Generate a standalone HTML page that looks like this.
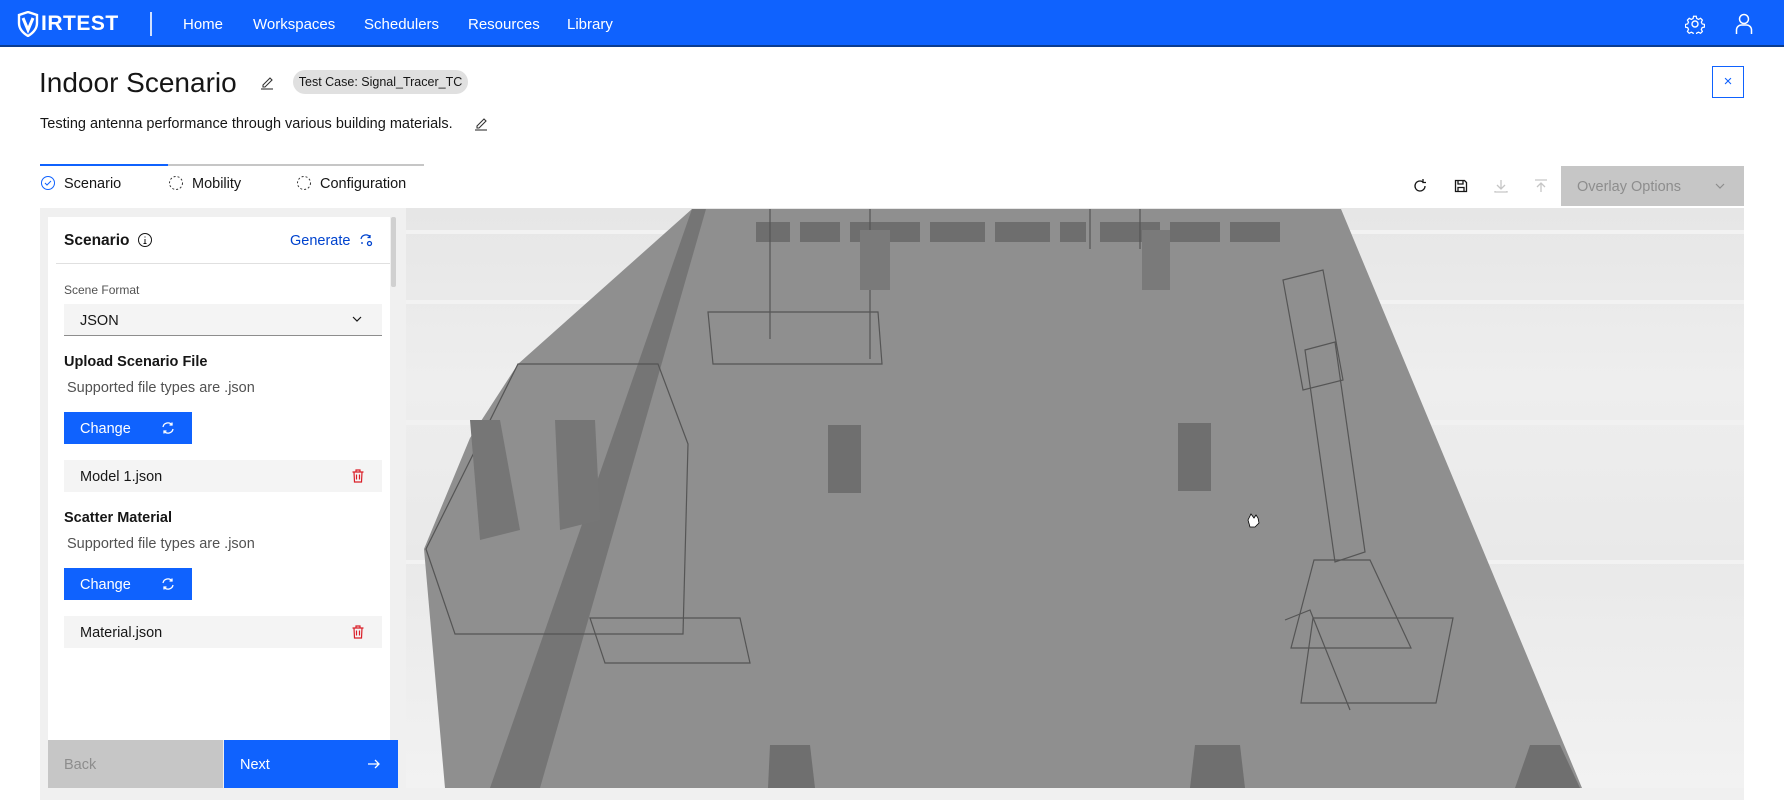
<!DOCTYPE html>
<html><head><meta charset="utf-8">
<style>
*{margin:0;padding:0;box-sizing:border-box}
body{width:1784px;height:800px;overflow:hidden;background:#fff;font-family:"Liberation Sans",sans-serif;color:#161616;position:relative}
.abs{position:absolute}
.hdr{left:0;top:0;width:1784px;height:47px;background:#0f62fe;border-bottom:2px solid #0b3d91}
.nav{top:16px;color:#fff;font-size:15px}
.t{white-space:nowrap}
</style></head><body>
<div class="abs hdr"></div>
<svg class="abs" style="left:17px;top:11px" width="22" height="26" viewBox="0 0 22 26"><path d="M11 1L20 4V12C20 18 16 22 11 25C6 22 2 18 2 12V4Z" fill="none" stroke="#fff" stroke-width="2.4"/><path d="M6 7L11 19L16 7" fill="none" stroke="#fff" stroke-width="3"/></svg>
<div class="abs t" style="left:41px;top:12px;color:#fff;font-weight:bold;font-size:21px;letter-spacing:0.5px">IRTEST</div>
<div class="abs" style="left:150px;top:12px;width:2px;height:24px;background:#cfe0ff"></div>
<div class="abs nav t" style="left:183px">Home</div>
<div class="abs nav t" style="left:253px">Workspaces</div>
<div class="abs nav t" style="left:364px">Schedulers</div>
<div class="abs nav t" style="left:468px">Resources</div>
<div class="abs nav t" style="left:567px">Library</div>
<svg class="abs" style="left:1685px;top:14px" width="20" height="20" viewBox="0 0 20 20" fill="none" stroke="#fff" stroke-width="1.4"><circle cx="10" cy="10" r="3"/><path d="M8.5 1.5h3l.5 2.5 2 1 2.3-1.2 2 2-1.2 2.3 1 2 2.5.5v3l-2.5.5-1 2 1.2 2.3-2 2-2.3-1.2-2 1-.5 2.5h-3l-.5-2.5-2-1-2.3 1.2-2-2 1.2-2.3-1-2-2.5-.5v-3l2.5-.5 1-2-1.2-2.3 2-2 2.3 1.2 2-1z" transform="scale(.9) translate(1 1)"/></svg>
<svg class="abs" style="left:1735px;top:13px" width="18" height="22" viewBox="0 0 18 22" fill="none" stroke="#fff" stroke-width="1.5"><circle cx="9" cy="6" r="4.5"/><path d="M1.5 21V17a5 5 0 0 1 5-5h5a5 5 0 0 1 5 5v4"/></svg>

<div class="abs t" style="left:39px;top:67px;font-size:28px;font-weight:300">Indoor Scenario</div>
<svg class="abs" style="left:259px;top:74px" width="16" height="16" viewBox="0 0 16 16" fill="none" stroke="#333" stroke-width="1.1"><path d="M4 11L11 4l2 2-7 7H4z"/><path d="M2 15h12"/></svg>
<div class="abs t" style="left:293px;top:70px;width:175px;height:24px;border-radius:12px;background:#e0e0e0;font-size:12.5px;line-height:24px;text-align:center;color:#161616">Test Case: Signal_Tracer_TC</div>
<div class="abs" style="left:1712px;top:66px;width:32px;height:32px;border:1px solid #0f62fe;color:#0f62fe;font-size:15px;line-height:29px;text-align:center">×</div>
<div class="abs t" style="left:40px;top:116px;font-size:14.5px">Testing antenna performance through various building materials.</div>
<svg class="abs" style="left:473px;top:115px" width="16" height="16" viewBox="0 0 16 16" fill="none" stroke="#333" stroke-width="1.1"><path d="M4 11L11 4l2 2-7 7H4z"/><path d="M2 15h12"/></svg>

<div class="abs" style="left:40px;top:164px;width:384px;height:2px;background:#c6c6c6"></div>
<div class="abs" style="left:40px;top:164px;width:128px;height:2px;background:#0f62fe"></div>
<svg class="abs" style="left:40px;top:175px" width="16" height="16" viewBox="0 0 16 16" fill="none"><circle cx="8" cy="8" r="6.5" stroke="#0f62fe"/><path d="M5 8l2 2 4-4" stroke="#0f62fe"/></svg>
<div class="abs t" style="left:64px;top:176px;font-size:14.5px">Scenario</div>
<svg class="abs" style="left:168px;top:175px" width="16" height="16" viewBox="0 0 16 16" fill="none"><circle cx="8" cy="8" r="6.5" stroke="#333" stroke-dasharray="2 2"/></svg>
<div class="abs t" style="left:192px;top:176px;font-size:14.5px">Mobility</div>
<svg class="abs" style="left:296px;top:175px" width="16" height="16" viewBox="0 0 16 16" fill="none"><circle cx="8" cy="8" r="6.5" stroke="#333" stroke-dasharray="2 2"/></svg>
<div class="abs t" style="left:320px;top:176px;font-size:14.5px">Configuration</div>

<svg class="abs" style="left:1412px;top:178px" width="16" height="16" viewBox="0 0 16 16" fill="none" stroke="#161616" stroke-width="1.3"><path d="M13 8a5 5 0 1 1-2-4"/><path d="M11 1v3.5h3"/></svg>
<svg class="abs" style="left:1453px;top:178px" width="16" height="16" viewBox="0 0 16 16" fill="none" stroke="#161616" stroke-width="1.3"><path d="M2.5 2.5h9l2 2v9h-11z"/><path d="M5 2.5v3.5h5V2.5M5 13.5v-4h6v4"/></svg>
<svg class="abs" style="left:1493px;top:178px" width="16" height="16" viewBox="0 0 16 16" fill="none" stroke="#c6c6c6" stroke-width="1.3"><path d="M8 2v9M4 7l4 4 4-4M2 13v1h12v-1"/></svg>
<svg class="abs" style="left:1533px;top:178px" width="16" height="16" viewBox="0 0 16 16" fill="none" stroke="#c6c6c6" stroke-width="1.3"><path d="M8 14V5M4 9l4-4 4 4M2 2h12"/></svg>
<div class="abs" style="left:1561px;top:166px;width:183px;height:40px;background:#c6c6c6"></div>
<div class="abs t" style="left:1577px;top:179px;font-size:14.5px;color:#8d8d8d">Overlay Options</div>
<svg class="abs" style="left:1713px;top:180px" width="14" height="12" viewBox="0 0 14 12" fill="none" stroke="#8d8d8d" stroke-width="1.2"><path d="M3 4l4 4 4-4"/></svg>

<div class="abs" style="left:40px;top:208px;width:1704px;height:592px;background:#f0f0f0"></div>
<svg class="abs" style="left:406px;top:208px" width="1338" height="580" viewBox="406 208 1338 580">
<defs><linearGradient id="bg" x1="0" y1="0" x2="0" y2="1"><stop offset="0" stop-color="#e6e6e6"/><stop offset=".3" stop-color="#eeeeee"/><stop offset=".6" stop-color="#e9e9e9"/><stop offset="1" stop-color="#f2f2f2"/></linearGradient></defs>
<rect x="406" y="208" width="1338" height="580" fill="url(#bg)"/>
<rect x="406" y="230" width="1338" height="4" fill="#f2f2f2"/><rect x="406" y="300" width="1338" height="4" fill="#f2f2f2"/><rect x="406" y="420" width="1338" height="5" fill="#f1f1f1"/><rect x="406" y="560" width="1338" height="4" fill="#f2f2f2"/>
<polygon points="692,209 1341,209 1582,788 445,788 424,549 470,438 518,364" fill="#8f8f8f"/>
<polygon points="692,209 706,209 540,788 490,788" fill="#757575"/>
<rect x="756" y="222" width="330" height="20" fill="#6e6e6e"/>
<rect x="1100" y="222" width="180" height="20" fill="#6e6e6e"/>
<g fill="#8f8f8f"><rect x="790" y="222" width="10" height="20"/><rect x="840" y="222" width="10" height="20"/><rect x="920" y="222" width="10" height="20"/><rect x="985" y="222" width="10" height="20"/><rect x="1050" y="222" width="10" height="20"/><rect x="1160" y="222" width="10" height="20"/><rect x="1220" y="222" width="10" height="20"/></g>
<g fill="none" stroke="#555" stroke-width="1.2">
<path d="M708 312h170l4 52H713z"/><path d="M1314 560l-23 88h120l-41-88zM1313 618h140l-17 85h-135z"/><path d="M590 618h150l10 45H605z"/>
<path d="M518 364h140l30 80-5 190H455l-29-85z"/>
<path d="M1283 280l40-10 20 110-40 10z"/><path d="M1305 350l30-8 30 210-30 10z"/>
<path d="M770 209v130M870 209v150M1090 209v40M1140 209v40"/>
<path d="M1285 620l25 -10 40 100" />
</g>
<rect x="828" y="425" width="33" height="68" fill="#6f6f6f"/><rect x="1178" y="423" width="33" height="68" fill="#6f6f6f"/>
<rect x="860" y="230" width="30" height="60" fill="#7a7a7a"/><rect x="1142" y="230" width="28" height="60" fill="#7a7a7a"/>
<polygon points="770,745 810,745 815,788 768,788" fill="#6f6f6f"/><polygon points="1195,745 1240,745 1245,788 1190,788" fill="#6f6f6f"/><polygon points="1530,745 1560,745 1580,788 1515,788" fill="#6f6f6f"/>
<polygon points="470,420 500,420 520,530 480,540" fill="#767676"/><polygon points="555,420 595,420 600,520 560,530" fill="#767676"/>
<path d="M1248 520l3 -6 3 4 2-3 2 3 1 5-4 4h-5z" fill="#fff" stroke="#000" stroke-width=".8"/>
</svg>

<div class="abs" style="left:48px;top:217px;width:342px;height:523px;background:#fff"></div>
<div class="abs" style="left:391px;top:217px;width:5px;height:70px;background:#d0d0d0;border-radius:2px"></div>
<div class="abs t" style="left:64px;top:232px;font-size:15.5px;font-weight:bold">Scenario</div>
<svg class="abs" style="left:137px;top:232px" width="16" height="16" viewBox="0 0 16 16" fill="none" stroke="#161616"><circle cx="8" cy="8" r="6.5"/><path d="M8 7v4.5M6.5 11.5h3M8 4.5v1"/></svg>
<div class="abs t" style="left:290px;top:233px;font-size:14.5px;color:#0043ce">Generate</div>
<svg class="abs" style="left:358px;top:232px" width="16" height="16" viewBox="0 0 16 16" fill="none" stroke="#0043ce" stroke-width="1.3"><path d="M3 7a5 5 0 0 1 9-2M12 3v2.5H9.5M4 10v2"/><circle cx="11.5" cy="11.5" r="2"/></svg>
<div class="abs" style="left:56px;top:263px;width:334px;height:1px;background:#e0e0e0"></div>
<div class="abs t" style="left:64px;top:283px;font-size:12px;color:#525252">Scene Format</div>
<div class="abs" style="left:64px;top:304px;width:318px;height:32px;background:#f4f4f4;border-bottom:1px solid #8d8d8d"></div>
<div class="abs t" style="left:80px;top:313px;font-size:14.5px">JSON</div>
<svg class="abs" style="left:350px;top:313px" width="14" height="12" viewBox="0 0 14 12" fill="none" stroke="#161616" stroke-width="1.2"><path d="M3 4l4 4 4-4"/></svg>
<div class="abs t" style="left:64px;top:354px;font-size:14.5px;font-weight:bold">Upload Scenario File</div>
<div class="abs t" style="left:67px;top:380px;font-size:14.5px;color:#525252">Supported file types are .json</div>
<div class="abs" style="left:64px;top:412px;width:128px;height:32px;background:#0f62fe"></div>
<div class="abs t" style="left:80px;top:421px;font-size:14.5px;color:#fff">Change</div>
<svg class="abs" style="left:160px;top:420px" width="16" height="16" viewBox="0 0 16 16" fill="none" stroke="#fff" stroke-width="1.3"><path d="M3 7a5 5 0 0 1 9-2M12 2.5v2.5H9.5M13 9a5 5 0 0 1-9 2M4 13.5V11h2.5"/></svg>
<div class="abs" style="left:64px;top:460px;width:318px;height:32px;background:#f4f4f4"></div>
<div class="abs t" style="left:80px;top:469px;font-size:14.5px">Model 1.json</div>
<svg class="abs" style="left:350px;top:468px" width="16" height="16" viewBox="0 0 16 16" fill="none" stroke="#da1e28" stroke-width="1.2"><path d="M2.5 4h11M6 4V2h4v2M4 4l.5 10h7L12 4M6.5 6.5v5M9.5 6.5v5"/></svg>
<div class="abs t" style="left:64px;top:510px;font-size:14.5px;font-weight:bold">Scatter Material</div>
<div class="abs t" style="left:67px;top:536px;font-size:14.5px;color:#525252">Supported file types are .json</div>
<div class="abs" style="left:64px;top:568px;width:128px;height:32px;background:#0f62fe"></div>
<div class="abs t" style="left:80px;top:577px;font-size:14.5px;color:#fff">Change</div>
<svg class="abs" style="left:160px;top:576px" width="16" height="16" viewBox="0 0 16 16" fill="none" stroke="#fff" stroke-width="1.3"><path d="M3 7a5 5 0 0 1 9-2M12 2.5v2.5H9.5M13 9a5 5 0 0 1-9 2M4 13.5V11h2.5"/></svg>
<div class="abs" style="left:64px;top:616px;width:318px;height:32px;background:#f4f4f4"></div>
<div class="abs t" style="left:80px;top:625px;font-size:14.5px">Material.json</div>
<svg class="abs" style="left:350px;top:624px" width="16" height="16" viewBox="0 0 16 16" fill="none" stroke="#da1e28" stroke-width="1.2"><path d="M2.5 4h11M6 4V2h4v2M4 4l.5 10h7L12 4M6.5 6.5v5M9.5 6.5v5"/></svg>

<div class="abs" style="left:48px;top:740px;width:175px;height:48px;background:#c6c6c6"></div>
<div class="abs t" style="left:64px;top:757px;font-size:14.5px;color:#8d8d8d">Back</div>
<div class="abs" style="left:224px;top:740px;width:174px;height:48px;background:#0f62fe"></div>
<div class="abs t" style="left:240px;top:757px;font-size:14.5px;color:#fff">Next</div>
<svg class="abs" style="left:366px;top:756px" width="16" height="16" viewBox="0 0 16 16" fill="none" stroke="#fff" stroke-width="1.3"><path d="M2 8h11M9 4l4 4-4 4"/></svg>
</body></html>
